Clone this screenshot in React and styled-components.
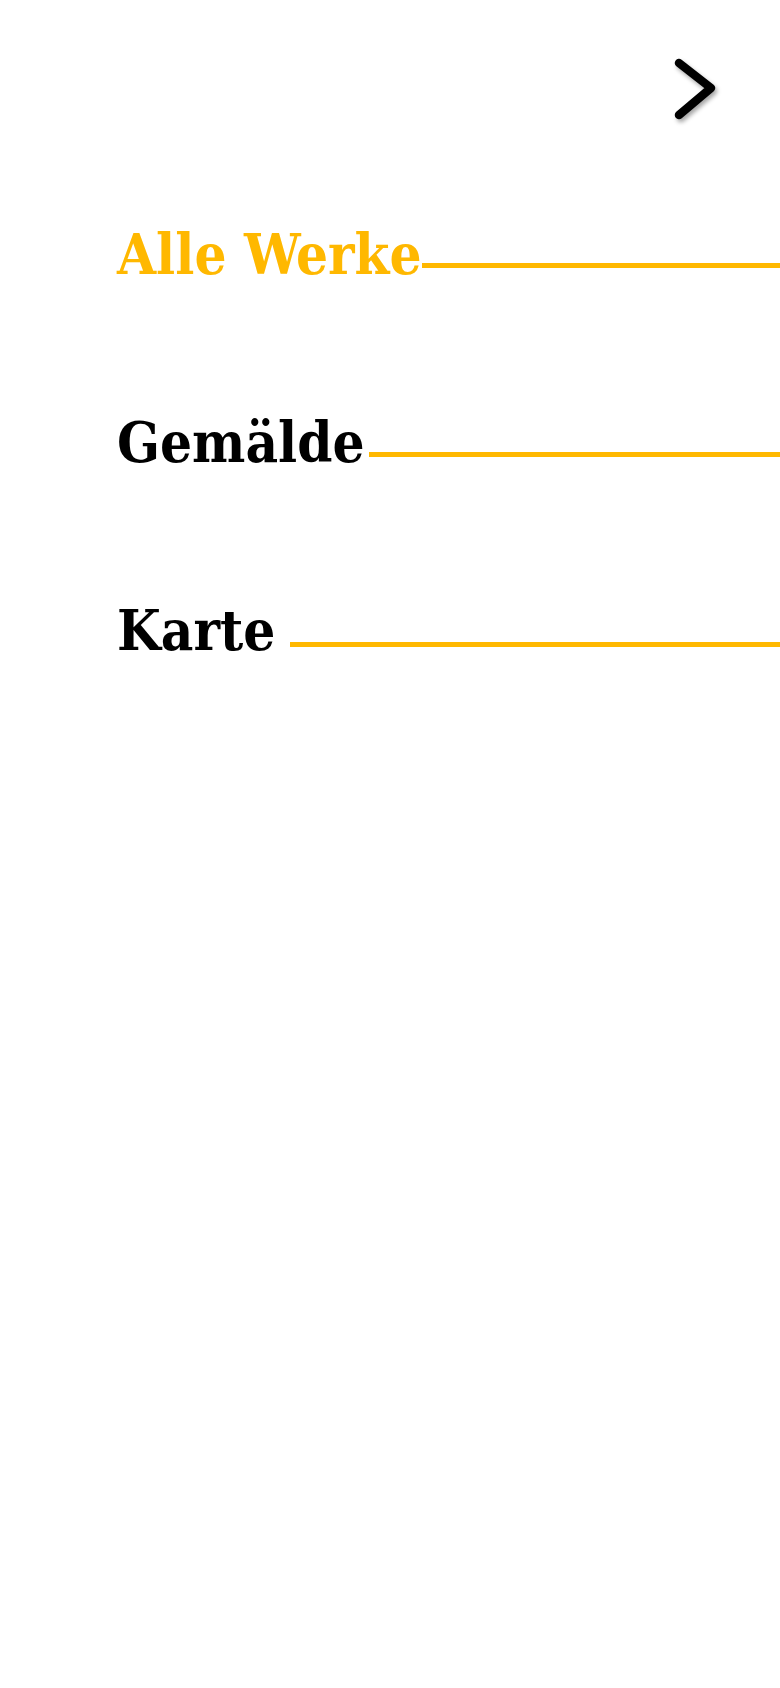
import styled, { createGlobalStyle } from "styled-components";

const GlobalStyle = createGlobalStyle`
    html, body {
        margin: 0;
        padding: 0;
        background: #fff;
    }
`;

const items = [
    { label: "Alle Werke", active: true, gap: 0, lift: 7 },
    { label: "Gemälde", active: false, gap: 5, lift: 6 },
    { label: "Karte", active: false, gap: 15, lift: 4 },
];

export default function App() {
    return (
        <>
            <GlobalStyle />
            <Page>
                <TopBar>
                    <NextButton aria-label="weiter">
                        <svg width="52" height="72" viewBox="0 0 52 72">
                            <polyline
                                points="9,8 41,33 9,60"
                                fill="none"
                                stroke="#000"
                                strokeWidth="8.5"
                                strokeLinecap="round"
                                strokeLinejoin="round"
                            />
                        </svg>
                    </NextButton>
                </TopBar>
                <Menu>
                    {items.map((item) => (
                        <MenuItem key={item.label}>
                            <Label $active={item.active}>{item.label}</Label>
                            <Rule $gap={item.gap} $lift={item.lift} />
                        </MenuItem>
                    ))}
                </Menu>
            </Page>
        </>
    );
}

const Page = styled.div`
    width: 780px;
    min-height: 1688px;
    background: #fff;
`;

const TopBar = styled.div`
    display: flex;
    justify-content: flex-end;
    padding: 55px 58px 0 0;
`;

const NextButton = styled.button`
    border: none;
    background: transparent;
    padding: 0;
    cursor: pointer;
    filter: drop-shadow(2px 3px 2px rgba(0, 0, 0, 0.35));
`;

const Menu = styled.nav`
    display: flex;
    flex-direction: column;
    row-gap: 116px;
    padding: 88px 0 0 117px;
`;

const MenuItem = styled.div`
    display: flex;
    align-items: flex-end;
`;

const Label = styled.span`
    font-family: "DejaVu Serif Condensed", "DejaVu Serif", serif;
    font-stretch: condensed;
    font-weight: 700;
    font-size: 56px;
    line-height: 72px;
    color: ${(p) => (p.$active ? "#ffb800" : "#000")};
    white-space: nowrap;
`;

const Rule = styled.div`
    flex: 1;
    height: 5px;
    margin-left: ${(p) => p.$gap}px;
    margin-bottom: ${(p) => p.$lift + 15}px;
    background: #ffb800;
`;
